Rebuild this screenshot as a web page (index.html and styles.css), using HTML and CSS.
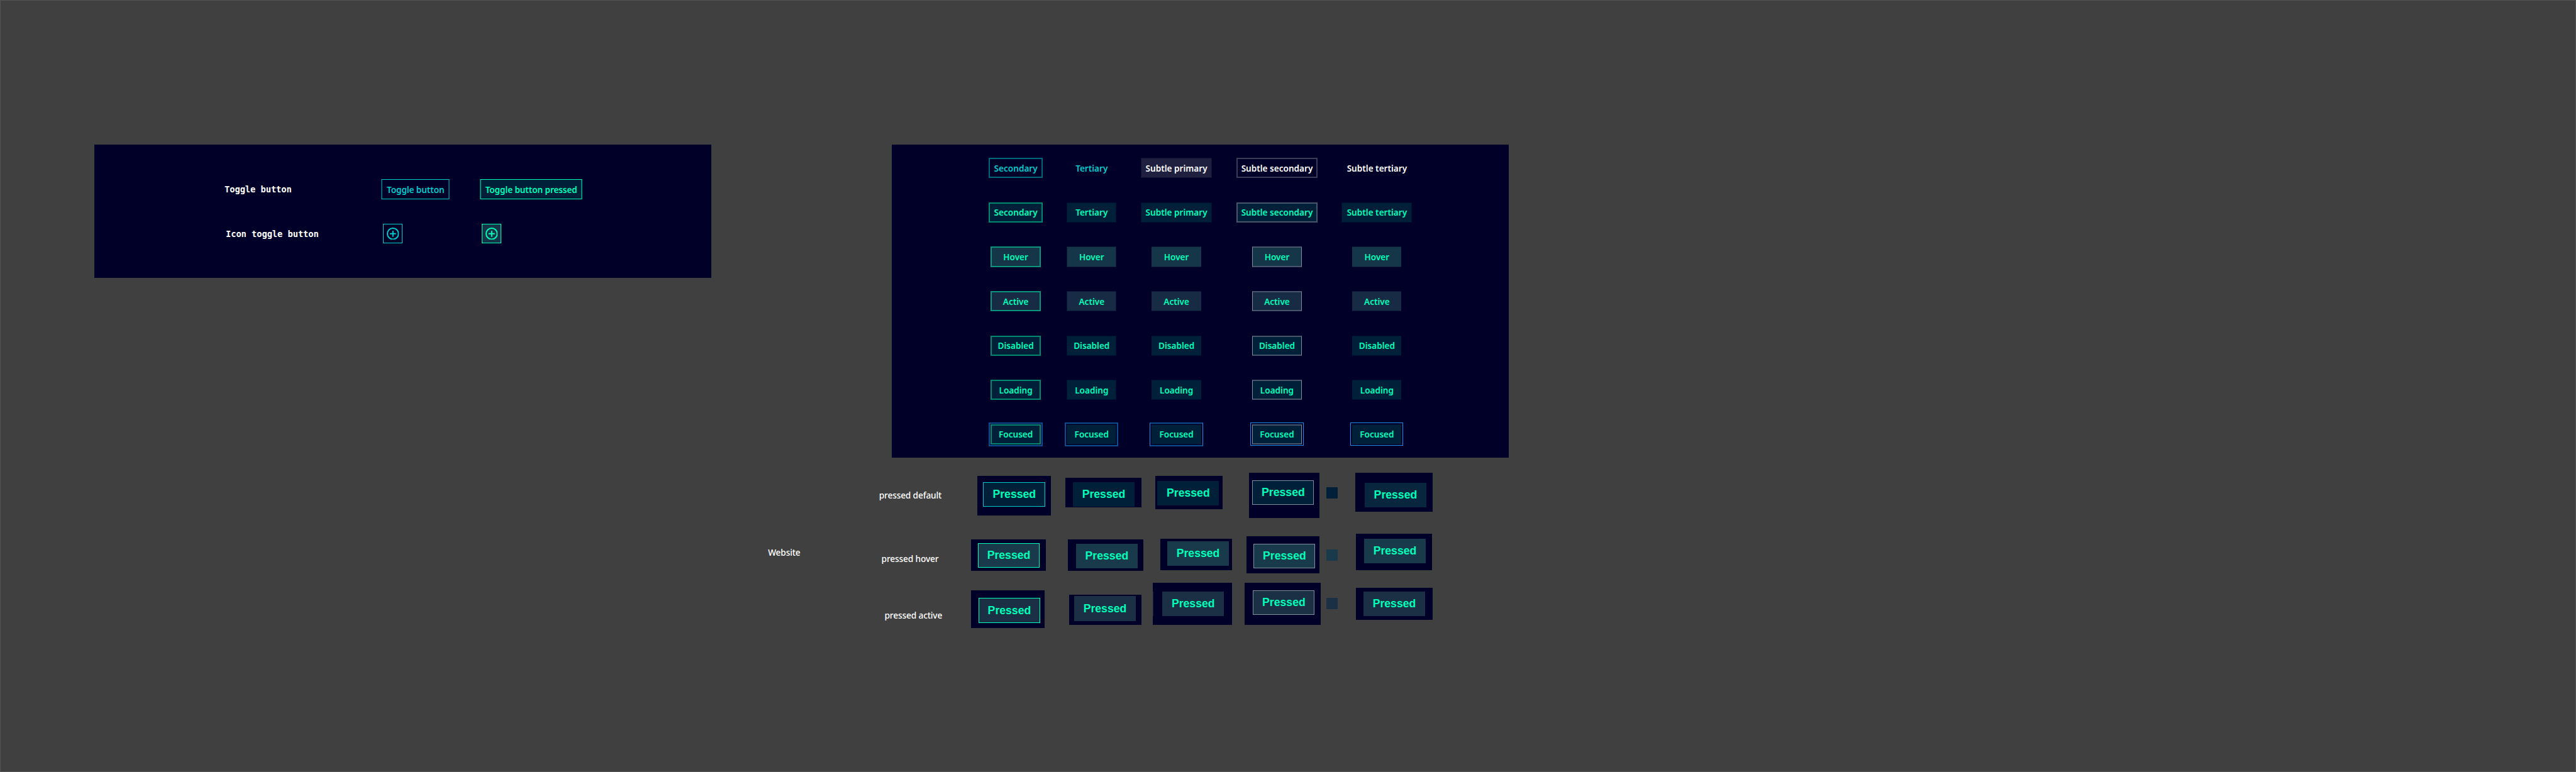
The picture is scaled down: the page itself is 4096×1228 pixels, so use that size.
FILE: index.html
```html
<!DOCTYPE html>
<html lang="en">
<head>
<meta charset="utf-8">
<title>Toggle buttons</title>
<link rel="stylesheet" href="styles.css">
</head>
<body>
<svg class="defs" aria-hidden="true"><symbol id="plus" viewBox="0 0 20 20"><circle cx="10" cy="10" r="9" fill="none" stroke="currentColor" stroke-width="2"/><path d="M10 5v10M5 10h10" fill="none" stroke="currentColor" stroke-width="2"/></symbol></svg>
<main class="board">

  <section class="panel toggles">
    <div class="mono">Toggle button</div>
    <div class="btn tgl">Toggle button</div>
    <div class="btn tgl on">Toggle button pressed</div>
    <div class="mono second">Icon toggle button</div>
    <div class="icon-btn"><svg><use href="#plus"/></svg></div>
    <div class="icon-btn on"><svg><use href="#plus"/></svg></div>
  </section>

  <section class="panel variants">
    <div class="btn c1 plain">Secondary</div>
    <div class="btn c2 plain">Tertiary</div>
    <div class="btn c3 plain">Subtle primary</div>
    <div class="btn c4 plain">Subtle secondary</div>
    <div class="btn c5 plain">Subtle tertiary</div>

    <div class="btn c1">Secondary</div>
    <div class="btn c2">Tertiary</div>
    <div class="btn c3">Subtle primary</div>
    <div class="btn c4">Subtle secondary</div>
    <div class="btn c5">Subtle tertiary</div>

    <div class="btn c1 state hover">Hover</div>
    <div class="btn c2 state hover">Hover</div>
    <div class="btn c3 state hover">Hover</div>
    <div class="btn c4 state hover">Hover</div>
    <div class="btn c5 state hover">Hover</div>

    <div class="btn c1 state active">Active</div>
    <div class="btn c2 state active">Active</div>
    <div class="btn c3 state active">Active</div>
    <div class="btn c4 state active">Active</div>
    <div class="btn c5 state active">Active</div>

    <div class="btn c1 state">Disabled</div>
    <div class="btn c2 state">Disabled</div>
    <div class="btn c3 state">Disabled</div>
    <div class="btn c4 state">Disabled</div>
    <div class="btn c5 state">Disabled</div>

    <div class="btn c1 state">Loading</div>
    <div class="btn c2 state">Loading</div>
    <div class="btn c3 state">Loading</div>
    <div class="btn c4 state">Loading</div>
    <div class="btn c5 state">Loading</div>

    <div class="btn c1 state focus">Focused</div>
    <div class="btn c2 state focus">Focused</div>
    <div class="btn c3 state focus">Focused</div>
    <div class="btn c4 state focus">Focused</div>
    <div class="btn c5 state focus">Focused</div>
  </section>

  <div class="note website">Website</div>
  <div class="note n-default">pressed default</div>
  <div class="note n-hover">pressed hover</div>
  <div class="note n-active">pressed active</div>

  <div class="clip a1"><div class="web teal">Pressed</div></div>
  <div class="clip a2"><div class="web">Pressed</div></div>
  <div class="clip a3"><div class="web">Pressed</div></div>
  <div class="clip a4"><div class="web grey">Pressed</div></div>
  <div class="clip a5"><div class="web soft">Pressed</div></div>
  <div class="swatch s1"></div>

  <div class="clip b1"><div class="web w-hover green">Pressed</div></div>
  <div class="clip b2"><div class="web w-hover">Pressed</div></div>
  <div class="clip b3"><div class="web w-hover">Pressed</div></div>
  <div class="clip b4"><div class="web w-hover grey">Pressed</div></div>
  <div class="clip b5"><div class="web w-hover">Pressed</div></div>
  <div class="swatch s2"></div>

  <div class="clip k1"><div class="web w-active green">Pressed</div></div>
  <div class="clip k2"><div class="web w-active">Pressed</div></div>
  <div class="clip k3"><div class="web w-active">Pressed</div></div>
  <div class="clip k4"><div class="web w-active grey">Pressed</div></div>
  <div class="clip k5"><div class="web w-active">Pressed</div></div>
  <div class="swatch s3"></div>
</main>
</body>
</html>
```
FILE: styles.css
```css
/* 1rem is one unit of the board, which is 4176 x 1252 units */
html { font-size: 0.980843px; }
* { box-sizing: border-box; }
body { margin: 0; background: #404040; overflow: hidden; }
.defs { position: absolute; width: 0; height: 0; }

.board {
  position: relative;
  width: 100vw;
  height: 100vh;
  border: 1px solid #555;
  overflow: hidden;
  font-family: "Noto Sans", sans-serif;
  font-size: 14rem;
  white-space: nowrap;
}
.board > * { position: absolute; transform: translate(-1px, -1px); }

.panel { background: #000028; width: 1000rem; display: grid; top: 235rem; }

/* Buttons */
.btn {
  --fill: #001f39;
  --edge: #001031;
  position: relative;
  display: flex;
  align-items: center;
  justify-content: center;
  height: 33rem;
  width: 100%;
  padding-left: 0.4rem;
  background: var(--fill);
  border: 1px solid var(--edge);
  color: #00ffb9;
  font-size: 13.85rem;
  font-weight: 600;
}

/* Toggle panel */
.toggles {
  left: 153rem;
  height: 216rem;
  padding: 56rem 0 0 211rem;
  grid-template-columns: 254rem 160rem auto;
  grid-template-rows: 32rem 32rem;
  row-gap: 40rem;
}
.mono {
  padding-top: 0.8rem;
  font: bold 14rem/32rem "DejaVu Sans Mono", monospace;
  letter-spacing: -0.05rem;
  color: #fff;
}
.mono.second { padding-left: 2rem; }
.tgl {
  width: 111rem;
  height: 32rem;
  background: none;
  border: 1px solid #00cccc;
  border-width: 1px 2px;
  border-color: #00cccc #00667a;
  color: #00cccc;
  letter-spacing: -0.1rem;
}
.tgl.on {
  width: 166rem;
  background: #001f39;
  border-color: #00ffb9 #008f79;
  color: #00ffb9;
}
.icon-btn {
  margin-left: 3rem;
  width: 32rem;
  height: 32rem;
  border: 1px solid #00cccc;
  color: #00cccc;
  display: flex;
  align-items: center;
  justify-content: center;
}
.icon-btn svg { width: 20rem; height: 20rem; }
.icon-btn.on { background: #153548; border-color: #00ffb9; color: #00ffb9; }

/* Variants panel */
.variants {
  left: 1446rem;
  height: 507rem;
  padding: 21rem 0 0 157rem;
  grid-template-columns: 87rem 81rem 116rem 132rem 114rem;
  grid-auto-rows: 33rem;
  gap: 39rem;
  align-content: start;
  justify-items: center;
}
.state { width: 80rem; }
.state.c1, .state.c2 { width: 81rem; }
.hover { --fill: #153548; --edge: #0b1b38; }
.active { --fill: #182b44; --edge: #0c1636; }
.c1 { border: 2px solid #008871; }
.c1.hover, .c1.active { border-color: #0b957d; }
.c4 { border: 2px solid #47566a; }
.c4.state { border-width: 2px 1px; border-color: #47566a #808f9c; }
.state.c3, .state.c5 { border-width: 1px 0; }
.plain { background: none; border-color: transparent; color: #fff; }
.c1.plain { border-color: #00667a; color: #00cccc; }
.c2.plain { color: #00cccc; }
.c3.plain { background: #1f1f3f; border-color: #101034; }
.c4.plain { border-color: #3c3c59; }

.focus::after {
  content: "";
  position: absolute;
  inset: -5px;
  border: 2px solid #0c4d8f;
}
.c2.focus::after { inset: -4px; }
.c3.focus::after { inset: -4px -3px; border-width: 2px 1px; border-color: #0c4d8f #1d8be8; }
.c4.focus::after { inset: -5px -4px -4px; border: 1px solid #1d8be8; }
.c5.focus::after { inset: -4px -3px -3px; border: 1px solid #1d8be8; }

/* Notes */
.note { color: #fff; font-weight: 500; line-height: 20rem; letter-spacing: -0.16rem; }
.website { left: 1245rem; top: 886rem; }
.n-default { left: 1425rem; top: 793rem; }
.n-hover { left: 1429rem; top: 896rem; }
.n-active { left: 1434rem; top: 988rem; }

/* Clippings from the website */
.clip { background: #000028; }
.web {
  width: 100rem;
  height: 40rem;
  padding-left: 0.6rem;
  background: #001f39;
  border: 1px solid transparent;
  background-clip: border-box;
  color: #00ffb9;
  font: bold 18rem "Liberation Sans", Arial, sans-serif;
  display: flex;
  align-items: center;
  justify-content: center;
}
.soft { background: #09263f; }
.w-hover { background: #183a4b; }
.w-active { background: #1b3045; }
.teal { border-color: #00cccc; }
.green { border-color: #00ffb9; }
.grey { border-color: #808f9c; }

.a1 { left: 1584rem; top: 772rem; width: 120rem; height: 64rem; padding: 10rem; }
.a2 { left: 1727rem; top: 775rem; width: 123rem; height: 48rem; padding: 7rem 0 0 12rem; }
.a3 { left: 1873rem; top: 772rem; width: 109rem; height: 54rem; padding: 8rem 0 0 3rem; }
.a4 { left: 2025rem; top: 767rem; width: 114rem; height: 73rem; padding: 12rem 0 0 5rem; }
.a5 { left: 2197rem; top: 767rem; width: 125rem; height: 63rem; padding: 16rem 0 0 15rem; }
.b1 { left: 1574rem; top: 875rem; width: 121rem; height: 51rem; padding: 6rem 0 0 11rem; }
.b2 { left: 1731rem; top: 875rem; width: 123rem; height: 51rem; padding: 7rem 0 0 13rem; }
.b3 { left: 1881rem; top: 874rem; width: 116rem; height: 51rem; padding: 4rem 0 0 11rem; }
.b4 { left: 2021rem; top: 870rem; width: 118rem; height: 60rem; padding: 12rem 0 0 11rem; }
.b5 { left: 2198rem; top: 866rem; width: 123rem; height: 59rem; padding: 8rem 0 0 13rem; }
.k1 { left: 1574rem; top: 957rem; width: 119rem; height: 62rem; padding: 13rem 0 0 12rem; }
.k2 { left: 1733rem; top: 964rem; width: 117rem; height: 49rem; padding: 3rem 0 0 8rem; }
.k3 { left: 1869rem; top: 945rem; width: 128rem; height: 68rem; padding: 14rem 0 0 15rem; }
.k4 { left: 2018rem; top: 945rem; width: 123rem; height: 68rem; padding: 12rem 0 0 13rem; }
.k5 { left: 2198rem; top: 953rem; width: 124rem; height: 52rem; padding: 6rem 0 0 12rem; }
/* the neighbouring button's edge, caught in the clipping */
.k3::before {
  content: "";
  position: absolute;
  left: 0;
  top: 14rem;
  width: 1px;
  height: 40rem;
  background: #1f1f3f;
}
.swatch { left: 2150rem; width: 19rem; height: 18rem; background: #001f39; }
.s1 { top: 790rem; }
.s2 { top: 891rem; background: #183a4b; }
.s3 { top: 970rem; background: #1b3045; }
```
